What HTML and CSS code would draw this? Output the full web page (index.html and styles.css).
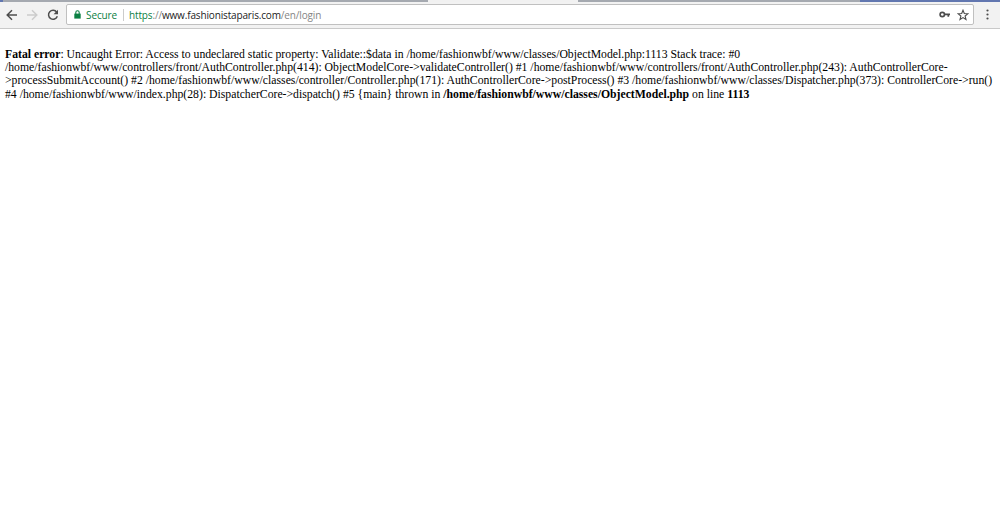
FILE: index.html
```html
<!DOCTYPE html>
<html lang="en">
<head>
    <meta charset="UTF-8">
    <title>Fatal error</title>
    <link rel="stylesheet" href="styles.css">
</head>
<body>
    <div class="tabstrip">
        <div class="edge"></div>
        <div class="tabs"></div>
        <div class="active-tab"></div>
        <div class="tabs rest"></div>
        <div class="frame"></div>
    </div>

    <div class="toolbar">
        <svg class="back" viewBox="0 0 12 12"><path d="M11 6H1.5M6 1.2L1.2 6L6 10.8"/></svg>
        <svg class="forward" viewBox="0 0 12 12"><path d="M1 6h9.5M6 1.2L10.8 6L6 10.8"/></svg>
        <svg class="reload" viewBox="0 0 12 12"><path d="M9.7 3.2A4.5 4.5 0 1 0 10.3 7.3"/><path class="tip" d="M11 .8v4.4H6.6z"/></svg>

        <div class="omnibox">
            <svg class="lock" viewBox="0 0 7 9"><path class="body" d="M.3 3.6h6.4v5H.3z"/><path class="shackle" d="M1.8 4V2.4a1.7 1.7 0 0 1 3.4 0V4"/></svg>
            <span class="secure">Secure</span>
            <span class="divider"></span>
            <div class="url"><span class="scheme">https</span><span class="path">://</span>www.fashionistaparis.com<span class="path">/en/login</span></div>
            <svg class="key" viewBox="0 0 12 7"><circle cx="3.3" cy="3.5" r="2.2"/><path d="M5.5 3.3H11M9.3 3.5v2.2"/></svg>
            <svg class="star" viewBox="0 0 12 12"><path d="M6 1.2l1.3 3.3 3.6.2-2.8 2.3.9 3.5L6 8.6 3 10.5l.9-3.5L1.1 4.7l3.6-.2z"/></svg>
        </div>

        <svg class="menu" viewBox="0 0 3 11"><circle cx="1.5" cy="1.5" r="1.1"/><circle cx="1.5" cy="5.5" r="1.1"/><circle cx="1.5" cy="9.5" r="1.1"/></svg>
    </div>

    <p class="error">
        <b>Fatal error</b>: Uncaught Error: Access to undeclared static property: Validate::$data in /home/fashionwbf/www/classes/ObjectModel.php:1113 Stack trace: #0<br>
        /home/fashionwbf/www/controllers/front/AuthController.php(414): ObjectModelCore-&gt;validateController() #1 /home/fashionwbf/www/controllers/front/AuthController.php(243): AuthControllerCore-<br>
        &gt;processSubmitAccount() #2 /home/fashionwbf/www/classes/controller/Controller.php(171): AuthControllerCore-&gt;postProcess() #3 /home/fashionwbf/www/classes/Dispatcher.php(373): ControllerCore-&gt;run()<br>
        #4 /home/fashionwbf/www/index.php(28): DispatcherCore-&gt;dispatch() #5 {main} thrown in <b>/home/fashionwbf/www/classes/ObjectModel.php</b> on line <b>1113</b>
    </p>
</body>
</html>
```

FILE: styles.css
```css
* {
    margin: 0;
    padding: 0;
    box-sizing: border-box;
}

body {
    background: #fff;
    overflow: hidden;
}

.tabstrip {
    display: flex;
    height: 2px;
    background: #f1f1f1;
}

.edge {
    width: 3px;
    background: #6277b0;
}

.tabs {
    width: 425px;
    background: #a5a9b0;
}

.active-tab {
    width: 150px;
}

.tabs.rest {
    width: 282px;
}

.frame {
    flex: 1;
    background: #6277b0;
}

.toolbar {
    display: flex;
    align-items: center;
    height: 27px;
    padding: 0 0 1px 6px;
    background: #f2f2f2;
    border-bottom: 1px solid #c9c9c9;
}

svg {
    display: block;
    flex: none;
    fill: none;
    stroke: #4d4d4d;
    stroke-width: 1.5;
}

.back,
.forward,
.reload {
    width: 12px;
    height: 12px;
}

.forward {
    margin-left: 8px;
    stroke: #ccc;
}

.reload {
    margin-left: 9px;
}

.reload .tip {
    fill: #4d4d4d;
    stroke: none;
}

.omnibox {
    display: flex;
    align-items: center;
    width: 908px;
    height: 21px;
    margin-left: 7px;
    padding-left: 7px;
    background: #fff;
    border: 1px solid #c0c0c0;
    border-radius: 2px;
    font-family: "Open Sans", sans-serif;
    font-size: 10px;
    line-height: 18px;
    white-space: nowrap;
}

.lock {
    width: 7px;
    height: 9px;
}

.lock .body {
    fill: #0b8043;
    stroke: none;
}

.lock .shackle {
    stroke: #0b8043;
    stroke-width: 1.1;
}

.secure {
    width: 32px;
    margin-left: 5px;
    color: #0b8043;
    letter-spacing: -0.1px;
}

.divider {
    width: 1px;
    height: 12px;
    margin: 0 5px;
    background: #ccc;
}

.url {
    flex: 1;
    color: #222;
    letter-spacing: -0.15px;
}

.scheme {
    color: #0b8043;
}

.path {
    color: #858585;
}

.key {
    width: 12px;
    height: 7px;
    margin-right: 6px;
    stroke-width: 1.7;
}

.star {
    width: 12px;
    height: 12px;
    margin-right: 4px;
    stroke-width: 1.1;
}

.menu {
    width: 3px;
    height: 11px;
    margin-left: 12px;
    fill: #4d4d4d;
    stroke: none;
}

.error {
    padding: 19px 5px 0;
    font-family: "Liberation Serif", "Times New Roman", serif;
    font-size: 11.73px;
    line-height: 13.2px;
    color: #000;
    white-space: nowrap;
}
```
